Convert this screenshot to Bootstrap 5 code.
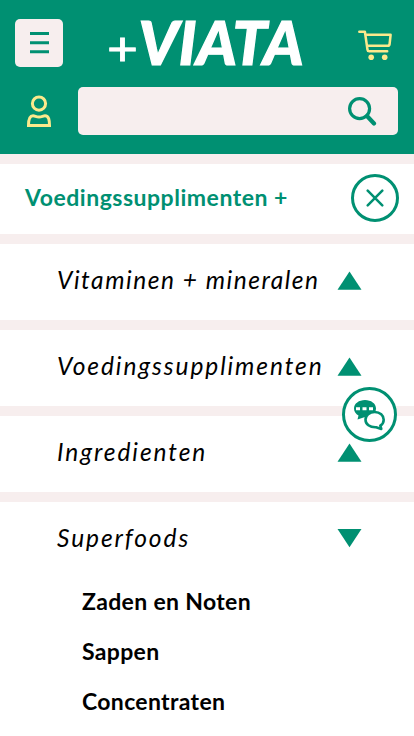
<!DOCTYPE html>
<html lang="nl">
<head>
<meta charset="utf-8">
<meta name="viewport" content="width=device-width, initial-scale=1">
<title>+VIATA</title>
<link href="https://cdn.jsdelivr.net/npm/bootstrap@5.3.0/dist/css/bootstrap.min.css" rel="stylesheet">
<style>
:root { --viata-green: #009072; --viata-blush: #f7eeee; --viata-yellow: #fbe98c; }
body { font-family: Lato, "Open Sans", sans-serif; color: #000; height: 736px; overflow: hidden; }
svg { display: block; flex: none; }
.site-head { background: var(--viata-green); height: 154px; padding: 19px 16px 0 15px; }
.menu-btn { width: 48px; height: 48px; background: var(--viata-blush); border-radius: 5px; }
.brand { margin: -19px 0 -17px 42px; }
.cart-link { margin-right: 5px; }
.search-row { margin-top: 20px; }
.user-link { width: 63px; padding-left: 12px; }
.search-box { height: 48px; background: var(--viata-blush); border-radius: 5px; padding-right: 21px; }
.search-box .form-control { height: 48px; }
.section-row { border-top: 10px solid var(--viata-blush); }
.title-row { height: 80px; padding: 0 15px 0 25px; }
.title-row h1 { color: var(--viata-green); font-size: 23px; font-weight: 700; line-height: 28px; letter-spacing: .52px; padding-bottom: 4px; }
.close-btn { width: 48px; height: 48px; border: 3px solid var(--viata-green); margin-top: -2px; }
.menu-row { height: 86px; padding: 20px 52px 0 57px; }
.menu-row a { font-size: 24.5px; font-style: italic; line-height: 32px; letter-spacing: 1.92px; }
.menu-row a.snug { letter-spacing: 1.53px; }
.menu-row svg { margin-top: 2px; }
.sub-list { padding: 0 0 0 82px; margin-top: -2px; }
.sub-list li { height: 50px; font-size: 23px; font-weight: 700; line-height: 50px; letter-spacing: .33px; }
.chat-btn { position: absolute; left: 342px; top: 387px; width: 55px; height: 55px; border: 3px solid var(--viata-green); }
</style>
</head>
<body class="bg-white position-relative">
<header class="site-head">
  <div class="d-flex align-items-start">
    <button class="menu-btn btn border-0 p-0 d-flex align-items-center justify-content-center" aria-label="Menu">
      <svg width="19" height="22" viewBox="0 0 19 22" stroke="#009072" stroke-width="3"><path d="M0 1.5h19M0 10.7h19M0 19.7h19"/></svg>
    </button>
    <a class="brand text-decoration-none" href="#">
      <svg width="215" height="84" viewBox="0 -19 215 84" fill="#fff" font-family="Lato, sans-serif">
        <text x="2" y="45.5" font-size="46" stroke="#fff" stroke-width=".8" textLength="31" lengthAdjust="spacingAndGlyphs">+</text>
        <text x="33.500" y="46" font-size="61.500" font-weight="900" font-style="italic" stroke="#fff" stroke-width="1.200" textLength="165" lengthAdjust="spacingAndGlyphs">VIATA</text>
      </svg>
    </a>
    <a class="cart-link ms-auto" href="#" aria-label="Winkelwagen">
      <svg width="36" height="42" viewBox="357 19 36 42" fill="none" stroke="#fbe98c" stroke-width="2.5" stroke-linecap="round" stroke-linejoin="round"><path d="M359.3 31.8h5.6l2.6 18q.2 1.5 1.7 1.5h18M366 34.8h24.6l-1 9.2q-.2 1.8-2 1.8h-20"/><g fill="#fbe98c" stroke="none"><circle cx="371.2" cy="57.2" r="2.8"/><circle cx="384.7" cy="57.2" r="2.8"/></g></svg>
    </a>
  </div>
  <div class="search-row d-flex align-items-center">
    <a class="user-link" href="#" aria-label="Account">
      <svg width="24" height="34" viewBox="27 94 24 34" fill="none" stroke="#fbe98c" stroke-width="3"><circle cx="39" cy="103.6" r="6.6"/><path d="M28.500 125.600h21c0-5.500-.6-9.800-4.500-9.800-2.200 0-3 1.200-6 1.200s-3.800-1.200-6-1.200c-3.900 0-4.500 4.300-4.500 9.800z"/></svg>
    </a>
    <form class="search-box flex-grow-1 d-flex align-items-center">
      <input class="form-control bg-transparent border-0" type="search" aria-label="Zoeken">
      <svg width="30" height="30" viewBox="347 96 30 30" fill="none" stroke="#009072"><circle cx="359.600" cy="108.600" r="10" stroke-width="3.200"/><path d="M367 116l7 7.500" stroke-width="4.200" stroke-linecap="round"/></svg>
    </form>
  </div>
</header>
<main>
  <div class="section-row title-row d-flex align-items-center justify-content-between">
    <h1 class="m-0">Voedingssupplimenten +</h1>
    <button class="close-btn btn rounded-circle p-0 d-flex align-items-center justify-content-center" aria-label="Sluiten">
      <svg width="18" height="18" viewBox="0 0 18 18" stroke="#009072" stroke-width="2.500" stroke-linecap="round"><path d="M1.700 1.700l14.600 14.600M16.300 1.700l-14.600 14.600"/></svg>
    </button>
  </div>
  <nav>
    <div class="section-row menu-row d-flex align-items-start justify-content-between">
      <a class="snug text-black text-decoration-none text-nowrap" href="#">Vitaminen + mineralen</a>
      <svg width="25" height="32" viewBox="0 0 25 32" fill="#009072"><path d="M12.500 5.500L24.500 23.800H.5z"/></svg>
    </div>
    <div class="section-row menu-row d-flex align-items-start justify-content-between">
      <a class="text-black text-decoration-none text-nowrap" href="#">Voedingssupplimenten</a>
      <svg width="25" height="32" viewBox="0 0 25 32" fill="#009072"><path d="M12.500 5.500L24.500 23.800H.5z"/></svg>
    </div>
    <div class="section-row menu-row d-flex align-items-start justify-content-between">
      <a class="text-black text-decoration-none text-nowrap" href="#">Ingredienten</a>
      <svg width="25" height="32" viewBox="0 0 25 32" fill="#009072"><path d="M12.500 5.500L24.500 23.800H.5z"/></svg>
    </div>
    <div class="section-row menu-row d-flex align-items-start justify-content-between">
      <a class="text-black text-decoration-none text-nowrap" href="#">Superfoods</a>
      <svg width="25" height="32" viewBox="0 0 25 32" fill="#009072"><path d="M12.500 23.300L24.500 5H.5z"/></svg>
    </div>
    <ul class="sub-list list-unstyled">
      <li>Zaden en Noten</li>
      <li>Sappen</li>
      <li>Concentraten</li>
    </ul>
  </nav>
</main>
<button class="chat-btn btn bg-white rounded-circle p-0 d-flex align-items-center justify-content-center" aria-label="Chat">
  <svg width="33" height="33" viewBox="353 398 33 33"><path d="M365 400c6 0 11 3.500 11 8.500s-5 8.500-11 8.500l-7.500 2.500 1-4c-2.700-1.500-4.500-4-4.500-7 0-5 5-8.500 11-8.500z" fill="#009072"/><path d="M356 407.300h4v3h-4zM362.500 407.300h4v3h-4zM369 407.300h4v3h-4z" fill="#fff"/><path d="M374.700 412c5.300 0 9 3.400 9 7.700 0 2.600-1.200 4.600-3.400 6l1 3.200-5.200-1.600c-6.400.3-10.600-3.200-10.600-7.600s3.900-7.700 9.200-7.700z" fill="#fff" stroke="#009072" stroke-width="2.600" stroke-linejoin="round"/></svg>
</button>
<script src="https://cdn.jsdelivr.net/npm/bootstrap@5.3.0/dist/js/bootstrap.bundle.min.js"></script>
</body>
</html>
